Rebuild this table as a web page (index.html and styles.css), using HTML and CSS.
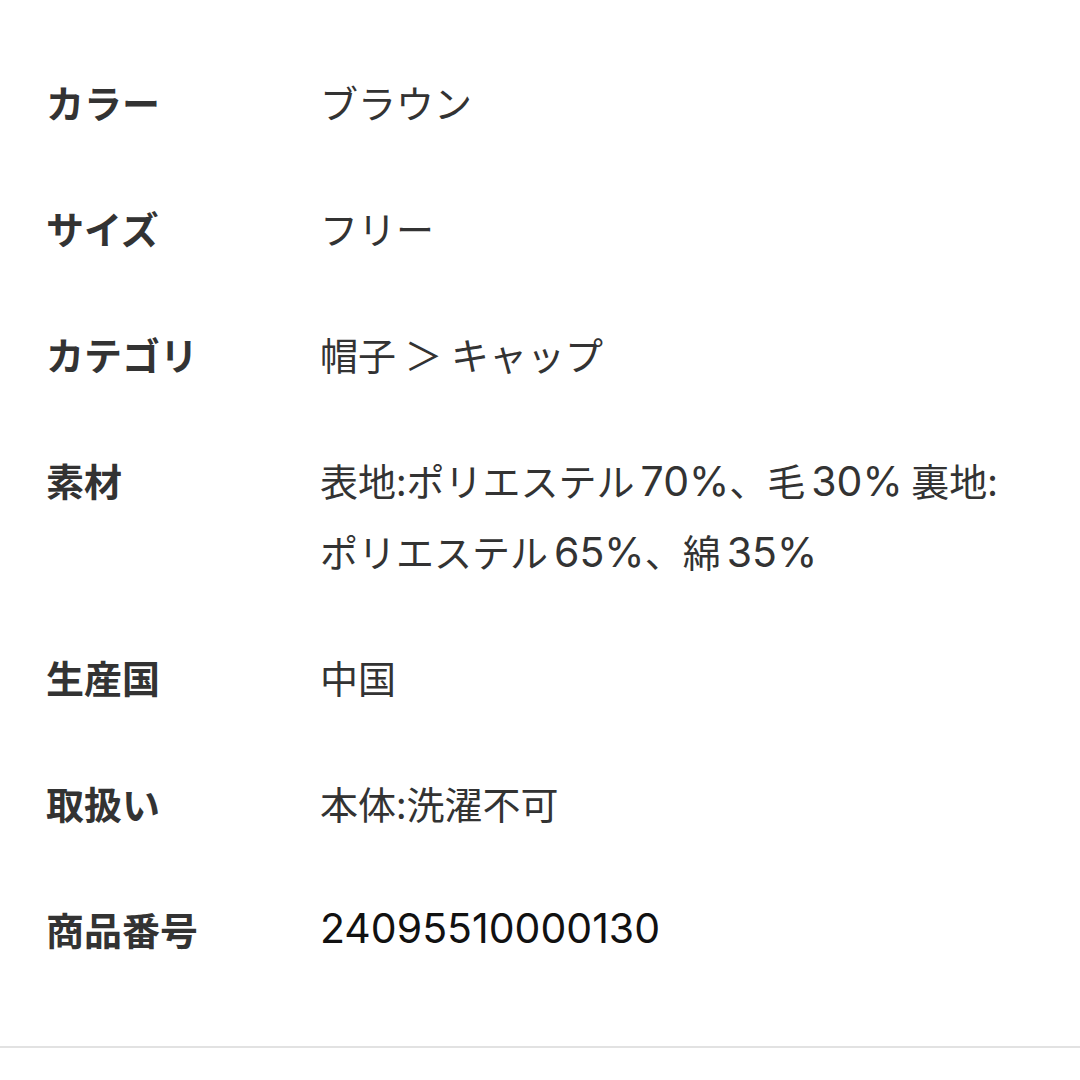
FILE: index.html
```html
<!DOCTYPE html>
<html lang="ja">
<head>
<meta charset="utf-8">
<link rel="stylesheet" href="styles.css">
</head>
<body>
<div class="spec">
  <dl class="list">
    <div class="row"><dt class="label">カラー</dt><dd class="value">ブラウン</dd></div>
    <div class="row"><dt class="label">サイズ</dt><dd class="value">フリー</dd></div>
    <div class="row"><dt class="label">カテゴリ</dt><dd class="value">帽子 ＞ キャップ</dd></div>
    <div class="row"><dt class="label">素材</dt><dd class="value">表地:ポリエステル<span class="lat">70%</span>、毛<span class="lat">30%</span> 裏地:ポリエステル<span class="lat">65%</span>、綿<span class="lat">35%</span></dd></div>
    <div class="row"><dt class="label">生産国</dt><dd class="value">中国</dd></div>
    <div class="row"><dt class="label">取扱い</dt><dd class="value">本体:洗濯不可</dd></div>
    <div class="row"><dt class="label">商品番号</dt><dd class="value num">24095510000130</dd></div>
  </dl>
  <div class="divider"></div>
</div>
</body>
</html>
```
FILE: styles.css
```css
html, body {
  margin: 0;
  padding: 0;
  background: #ffffff;
}
body {
  font-family: "Noto Sans CJK JP", "Noto Sans", sans-serif;
  color: #333333;
  width: 1080px;
  height: 1080px;
  overflow: hidden;
}
.spec {
  padding-top: 38px;
}
.list {
  margin: 0;
  padding: 0 50px 0 46px;
}
.row {
  display: grid;
  grid-template-columns: 274px 1fr;
  padding: 27.5px 0;
  font-size: 38px;
  line-height: 71px;
}
.label {
  margin: 0;
  font-weight: 700;
  color: #333333;
}
.value {
  margin: 0;
  font-weight: 400;
  color: #333333;
}
.lat {
  font-family: "Inter", "Noto Sans", sans-serif;
  font-size: 41px;
  line-height: 1;
  margin-left: 6px;
}
.num {
  font-family: "Inter", "Noto Sans", sans-serif;
  font-size: 41px;
  line-height: 71px;
  color: #111111;
}
.divider {
  margin-top: 55px;
  height: 2px;
  background: #e2e2e2;
}
```
